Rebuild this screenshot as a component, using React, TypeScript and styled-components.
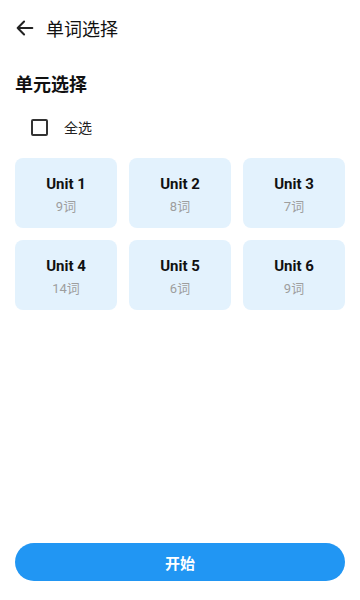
import React from 'react';
import styled, {createGlobalStyle} from 'styled-components';

const GlobalStyle = createGlobalStyle`
  html, body {
    margin: 0;
    padding: 0;
    background: #fff;
    font-family: Roboto, "Noto Sans CJK SC", sans-serif;
    color: #111;
  }
  * { box-sizing: border-box; }
`;

const Page = styled.div`
  min-height: 600px;
  display: flex;
  flex-direction: column;
`;

const Header = styled.header`
  height: 56px;
  display: flex;
  align-items: center;
  padding: 0 12px 0 14px;
  gap: 10px;
  > span {
    font-size: 18px;
    color: #111;
  }
`;

const Section = styled.div`
  padding: 0 15px;
`;

const SectionTitle = styled.h2`
  margin: 17px 0 0;
  font-size: 18px;
  font-weight: 700;
  line-height: 24px;
`;

const SelectAll = styled.label`
  display: flex;
  align-items: center;
  gap: 16px;
  margin: 18px 0 0 16px;
  height: 24px;
  font-size: 14px;
  color: #222;
`;

const Box = styled.span`
  width: 17px;
  height: 17px;
  border: 2px solid #333;
  border-radius: 2px;
`;

const Grid = styled.div`
  display: grid;
  grid-template-columns: repeat(3, 1fr);
  gap: 12px;
  margin-top: 19px;
`;

const Card = styled.div`
  height: 70px;
  padding-top: 4px;
  background: #e3f2fd;
  border-radius: 8px;
  display: flex;
  flex-direction: column;
  align-items: center;
  justify-content: center;
  gap: 5px;
`;

const UnitName = styled.div`
  font-size: 15px;
  font-weight: 700;
  color: #111;
  line-height: 18px;
`;

const Count = styled.div`
  font-size: 13px;
  color: #9e9e9e;
  line-height: 18px;
`;

const Footer = styled.div`
  margin-top: auto;
  padding: 0 15px 19px;
`;

const StartButton = styled.button`
  width: 100%;
  height: 38px;
  border: none;
  border-radius: 19px;
  background: #2196f3;
  color: #fff;
  font-size: 15px;
  font-weight: 700;
  font-family: inherit;
`;

const units = [
  {name: 'Unit 1', count: 9},
  {name: 'Unit 2', count: 8},
  {name: 'Unit 3', count: 7},
  {name: 'Unit 4', count: 14},
  {name: 'Unit 5', count: 6},
  {name: 'Unit 6', count: 9},
];

function App() {
  return (
    <Page>
      <GlobalStyle/>
      <Header>
        <svg width="22" height="22" viewBox="0 0 24 24" fill="none" stroke="#222" strokeWidth="2.2" strokeLinecap="round" strokeLinejoin="round">
          <path d="M20 12H4M11 5l-7 7 7 7"/>
        </svg>
        <span>单词选择</span>
      </Header>
      <Section>
        <SectionTitle>单元选择</SectionTitle>
        <SelectAll>
          <Box/>
          全选
        </SelectAll>
        <Grid>
          {units.map(u =>
            <Card key={u.name}>
              <UnitName>{u.name}</UnitName>
              <Count>{u.count}词</Count>
            </Card>
          )}
        </Grid>
      </Section>
      <Footer>
        <StartButton>开始</StartButton>
      </Footer>
    </Page>
  );
}

export default App;
